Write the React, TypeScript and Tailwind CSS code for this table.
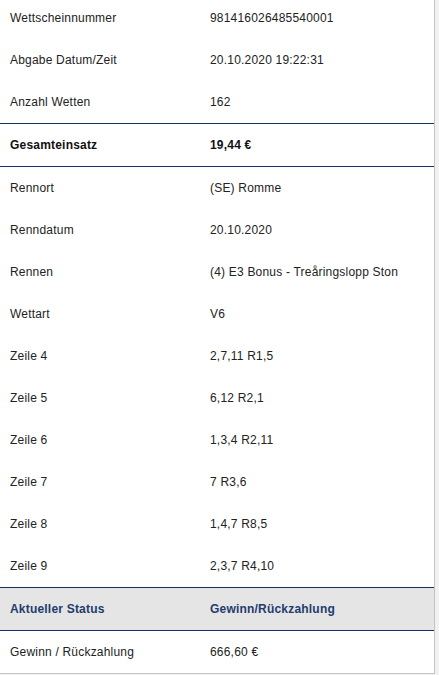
import React from "react";

const rows1 = [
    ["Wettscheinnummer", "981416026485540001"],
    ["Abgabe Datum/Zeit", "20.10.2020 19:22:31"],
    ["Anzahl Wetten", "162"],
];

const rows2 = [
    ["Rennort", "(SE) Romme"],
    ["Renndatum", "20.10.2020"],
    ["Rennen", "(4) E3 Bonus - Treåringslopp Ston"],
    ["Wettart", "V6"],
    ["Zeile 4", "2,7,11 R1,5"],
    ["Zeile 5", "6,12 R2,1"],
    ["Zeile 6", "1,3,4 R2,11"],
    ["Zeile 7", "7 R3,6"],
    ["Zeile 8", "1,4,7 R8,5"],
    ["Zeile 9", "2,3,7 R4,10"],
];

const Row = ({ label, value }: { label: string; value: string }) => (
    <div className="flex h-[42px] items-center">
        <div className="w-[200px] pl-[10px]">{label}</div>
        <div className="pl-[10px]">{value}</div>
    </div>
);

export default function App() {
    return (
        <div className="min-h-[675px] w-full overflow-hidden bg-[#f1f1f1] font-['Liberation_Sans',Arial,sans-serif] text-[12px] tracking-[0.2px] text-[#222]">
            <div className="-mt-[3px] w-[435px] border-r border-b border-[#c4c4c4] bg-white">
                {rows1.map(([l, v]) => (
                    <Row key={l} label={l} value={v} />
                ))}
                <div className="flex h-[44px] items-center border-y border-[#13306a] font-bold text-[#111]">
                    <div className="w-[200px] pl-[10px]">Gesamteinsatz</div>
                    <div className="pl-[10px]">19,44 €</div>
                </div>
                {rows2.map(([l, v]) => (
                    <Row key={l} label={l} value={v} />
                ))}
                <div className="flex h-[44px] items-center border-y border-[#13306a] bg-[#e5e5e5] font-bold text-[#1e3c6e]">
                    <div className="w-[200px] pl-[10px]">Aktueller Status</div>
                    <div className="pl-[10px]">Gewinn/Rückzahlung</div>
                </div>
                <Row label="Gewinn / Rückzahlung" value="666,60 €" />
            </div>
        </div>
    );
}
